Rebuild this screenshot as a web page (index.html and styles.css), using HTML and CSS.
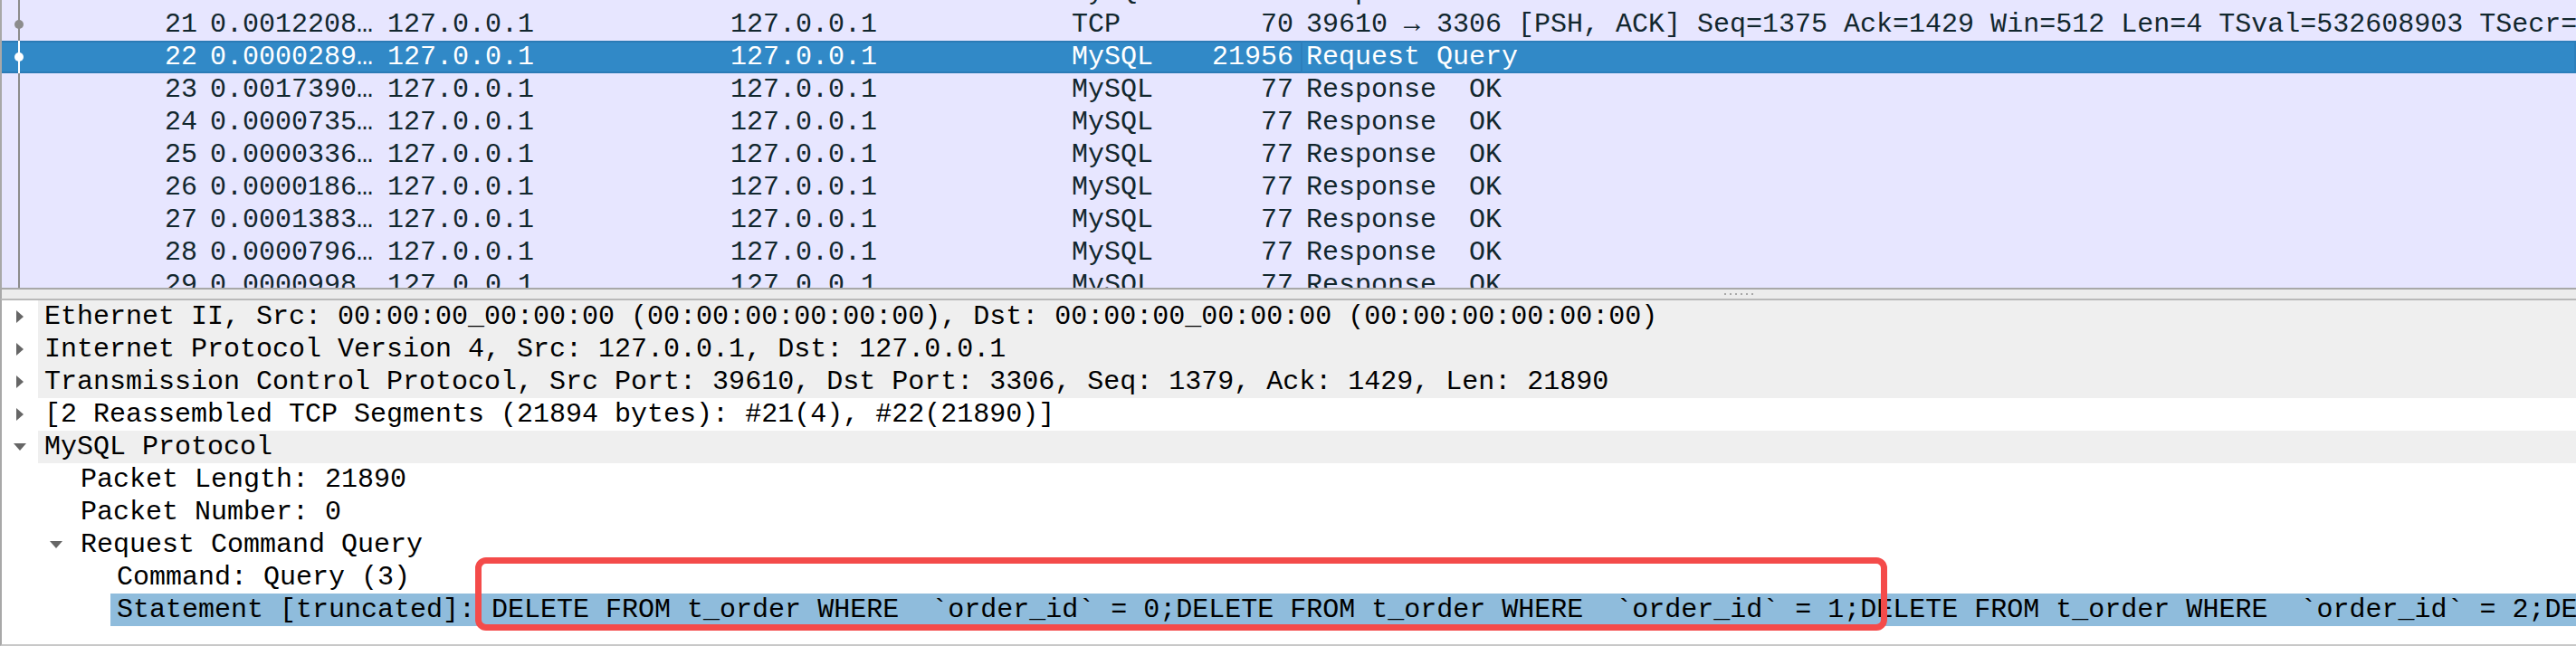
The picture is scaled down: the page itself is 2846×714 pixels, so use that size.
FILE: index.html
```html
<!DOCTYPE html>
<html>
<head>
<meta charset="utf-8">
<title>Wireshark</title>
<link rel="stylesheet" href="styles.css">
</head>
<body>
<div class="app">
  <div class="plist">
    <div class="plist-rows">
      <div class="prow"><span class="c no line">20</span><span class="c time">0.0000512…</span><span class="c src">127.0.0.1</span><span class="c dst">127.0.0.1</span><span class="c proto">MySQL</span><span class="c len">77</span><span class="c info">Response  OK</span></div>
      <div class="prow"><span class="c no line dot">21</span><span class="c time">0.0012208…</span><span class="c src">127.0.0.1</span><span class="c dst">127.0.0.1</span><span class="c proto">TCP</span><span class="c len">70</span><span class="c info">39610 → 3306 [PSH, ACK] Seq=1375 Ack=1429 Win=512 Len=4 TSval=532608903 TSecr=532608903</span></div>
      <div class="prow sel"><span class="c no line dot">22</span><span class="c time">0.0000289…</span><span class="c src">127.0.0.1</span><span class="c dst">127.0.0.1</span><span class="c proto">MySQL</span><span class="c len">21956</span><span class="c info focus">Request Query</span></div>
      <div class="prow"><span class="c no line">23</span><span class="c time">0.0017390…</span><span class="c src">127.0.0.1</span><span class="c dst">127.0.0.1</span><span class="c proto">MySQL</span><span class="c len">77</span><span class="c info">Response  OK</span></div>
      <div class="prow"><span class="c no line">24</span><span class="c time">0.0000735…</span><span class="c src">127.0.0.1</span><span class="c dst">127.0.0.1</span><span class="c proto">MySQL</span><span class="c len">77</span><span class="c info">Response  OK</span></div>
      <div class="prow"><span class="c no line">25</span><span class="c time">0.0000336…</span><span class="c src">127.0.0.1</span><span class="c dst">127.0.0.1</span><span class="c proto">MySQL</span><span class="c len">77</span><span class="c info">Response  OK</span></div>
      <div class="prow"><span class="c no line">26</span><span class="c time">0.0000186…</span><span class="c src">127.0.0.1</span><span class="c dst">127.0.0.1</span><span class="c proto">MySQL</span><span class="c len">77</span><span class="c info">Response  OK</span></div>
      <div class="prow"><span class="c no line">27</span><span class="c time">0.0001383…</span><span class="c src">127.0.0.1</span><span class="c dst">127.0.0.1</span><span class="c proto">MySQL</span><span class="c len">77</span><span class="c info">Response  OK</span></div>
      <div class="prow"><span class="c no line">28</span><span class="c time">0.0000796…</span><span class="c src">127.0.0.1</span><span class="c dst">127.0.0.1</span><span class="c proto">MySQL</span><span class="c len">77</span><span class="c info">Response  OK</span></div>
      <div class="prow"><span class="c no line">29</span><span class="c time">0.0000998…</span><span class="c src">127.0.0.1</span><span class="c dst">127.0.0.1</span><span class="c proto">MySQL</span><span class="c len">77</span><span class="c info">Response  OK</span></div>
    </div>
  </div>
  <div class="splitter"><span class="grip"></span></div>
  <div class="tree">
    <div class="trow l0 group"><span class="tw"><svg class="tri" width="8" height="14" viewBox="0 0 8 14"><path d="M0 0L8 7L0 14Z"/></svg></span><span class="tl">Ethernet II, Src: 00:00:00_00:00:00 (00:00:00:00:00:00), Dst: 00:00:00_00:00:00 (00:00:00:00:00:00)</span></div>
    <div class="trow l0 group"><span class="tw"><svg class="tri" width="8" height="14" viewBox="0 0 8 14"><path d="M0 0L8 7L0 14Z"/></svg></span><span class="tl">Internet Protocol Version 4, Src: 127.0.0.1, Dst: 127.0.0.1</span></div>
    <div class="trow l0 group"><span class="tw"><svg class="tri" width="8" height="14" viewBox="0 0 8 14"><path d="M0 0L8 7L0 14Z"/></svg></span><span class="tl">Transmission Control Protocol, Src Port: 39610, Dst Port: 3306, Seq: 1379, Ack: 1429, Len: 21890</span></div>
    <div class="trow l0"><span class="tw"><svg class="tri" width="8" height="14" viewBox="0 0 8 14"><path d="M0 0L8 7L0 14Z"/></svg></span><span class="tl">[2 Reassembled TCP Segments (21894 bytes): #21(4), #22(21890)]</span></div>
    <div class="trow l0 group"><span class="tw"><svg class="tri" width="14" height="8" viewBox="0 0 14 8"><path d="M0 0H14L7 8Z"/></svg></span><span class="tl">MySQL Protocol</span></div>
    <div class="trow l1"><span class="tw"></span><span class="tl">Packet Length: 21890</span></div>
    <div class="trow l1"><span class="tw"></span><span class="tl">Packet Number: 0</span></div>
    <div class="trow l1"><span class="tw"><svg class="tri" width="14" height="8" viewBox="0 0 14 8"><path d="M0 0H14L7 8Z"/></svg></span><span class="tl">Request Command Query</span></div>
    <div class="trow l2"><span class="tw"></span><span class="tl">Command: Query (3)</span></div>
    <div class="trow l2 hl"><span class="tw"></span><span class="tl">Statement [truncated]: DELETE FROM t_order WHERE  `order_id` = 0;DELETE FROM t_order WHERE  `order_id` = 1;DELETE FROM t_order WHERE  `order_id` = 2;DELETE FROM t_order WHERE  `order_id` = 3;</span></div>
  </div>
  <div class="mark"></div>
</div>
</body>
</html>
```

FILE: styles.css
```css
* { box-sizing: border-box; }
html, body { margin: 0; padding: 0; background: #ffffff; }
body { width: 2846px; height: 714px; overflow: hidden; }

.app {
  position: relative;
  display: flex;
  flex-direction: column;
  width: 2846px;
  height: 714px;
  font-family: "Liberation Mono", "DejaVu Sans Mono", monospace;
  font-size: 30px;
  line-height: 36px;
}

/* packet list */
.plist {
  flex: none;
  height: 320px;
  background: #e7e6ff;
  color: #12272e;
  border-left: 2px solid #a8a8a8;
  border-bottom: 2px solid #a8a8a8;
  overflow: hidden;
}
.plist-rows { margin-top: -27px; }
.prow {
  display: grid;
  grid-template-columns: 220px 198px 378px 378px 114px 147px 1fr;
  height: 36px;
  white-space: pre;
}
.c { overflow-x: clip; overflow-y: visible; }
.no { text-align: right; padding-right: 4px; position: relative; }
.time { padding-left: 10px; }
.src { padding-left: 8px; }
.dst { padding-left: 9px; }
.proto { padding-left: 8px; }
.len { text-align: right; padding-right: 8px; }
.info { padding-left: 6px; }

.line {
  background: linear-gradient(90deg, transparent 18px, #8c8c8c 18px, #8c8c8c 20px, transparent 20px);
}
.dot::after {
  content: "";
  position: absolute;
  left: 14px;
  top: 13px;
  width: 10px;
  height: 10px;
  border-radius: 50%;
  background: #8c8c8c;
}

.prow.sel {
  background: #3189c7;
  color: #ffffff;
  box-shadow: inset 0 2px 0 #2b7bb6, inset 0 -2px 0 #2b7bb6;
}
.sel .line {
  background: linear-gradient(90deg, transparent 18px, #ffffff 18px, #ffffff 20px, transparent 20px);
}
.sel .dot::after { background: #ffffff; }
.sel .focus { box-shadow: inset 0 0 0 2px #2c7fbc; }

/* splitter */
.splitter {
  flex: none;
  height: 10px;
  background: #ececec;
  border-left: 2px solid #a8a8a8;
  display: flex;
  align-items: center;
}
.grip {
  margin-left: 1903px;
  width: 36px;
  height: 2px;
  background: repeating-linear-gradient(90deg, #a8a8a8 0 2px, transparent 2px 6px);
}

/* details tree */
.tree {
  flex: 1;
  background: #ffffff;
  color: #000000;
  border-top: 2px solid #b9b9b9;
  border-left: 2px solid #a8a8a8;
  border-bottom: 2px solid #c8c8c8;
  overflow: hidden;
}
.trow {
  display: flex;
  height: 36px;
  white-space: pre;
}
.l1 { padding-left: 40px; }
.l2 { padding-left: 80px; }
.tw {
  flex: none;
  width: 40px;
  display: flex;
  align-items: center;
  justify-content: center;
}
.tri { display: block; fill: #666666; }
.tl {
  flex: 1;
  min-width: 0;
  padding-left: 7px;
  overflow-x: clip;
  overflow-y: visible;
}
.group .tl { background: #efefef; }
.hl .tl { background: #8fbcdc; }

/* annotation */
.mark {
  position: absolute;
  left: 525px;
  top: 616px;
  width: 1560px;
  height: 81px;
  border: 7px solid #f44b4a;
  border-radius: 12px;
}
```
